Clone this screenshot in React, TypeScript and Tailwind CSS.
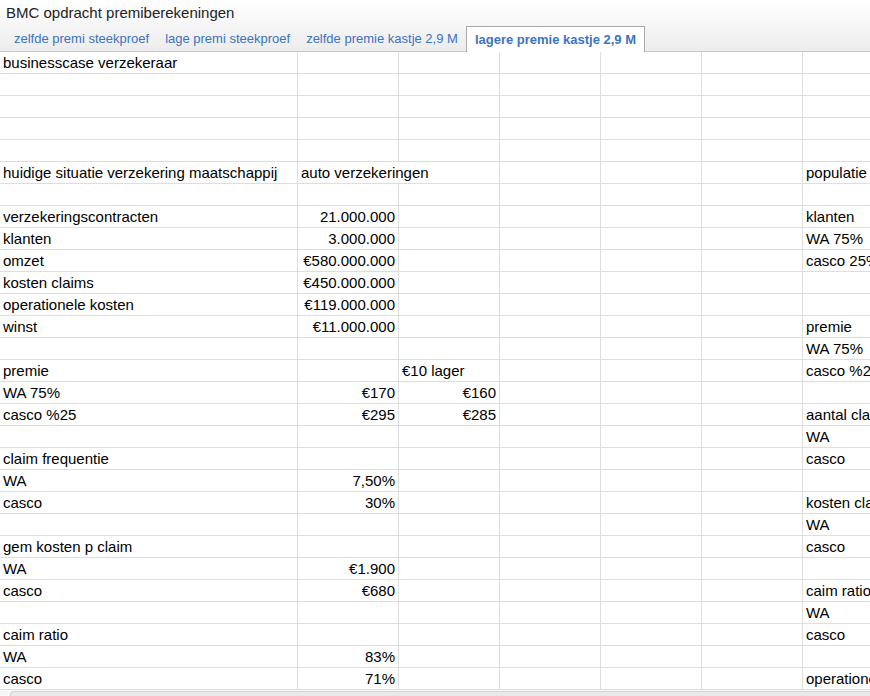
const rows: string[][] = [
  ["businesscase verzekeraar", "", "", "", "", "", ""],
  ["", "", "", "", "", "", ""],
  ["", "", "", "", "", "", ""],
  ["", "", "", "", "", "", ""],
  ["", "", "", "", "", "", ""],
  ["huidige situatie verzekering maatschappij", "auto verzekeringen", "", "", "", "", "populatie"],
  ["", "", "", "", "", "", ""],
  ["verzekeringscontracten", "21.000.000", "", "", "", "", "klanten"],
  ["klanten", "3.000.000", "", "", "", "", "WA 75%"],
  ["omzet", "€580.000.000", "", "", "", "", "casco 25%"],
  ["kosten claims", "€450.000.000", "", "", "", "", ""],
  ["operationele kosten", "€119.000.000", "", "", "", "", ""],
  ["winst", "€11.000.000", "", "", "", "", "premie"],
  ["", "", "", "", "", "", "WA 75%"],
  ["premie", "", "€10 lager", "", "", "", "casco %25"],
  ["WA 75%", "€170", "€160", "", "", "", ""],
  ["casco %25", "€295", "€285", "", "", "", "aantal claims"],
  ["", "", "", "", "", "", "WA"],
  ["claim frequentie", "", "", "", "", "", "casco"],
  ["WA", "7,50%", "", "", "", "", ""],
  ["casco", "30%", "", "", "", "", "kosten claims"],
  ["", "", "", "", "", "", "WA"],
  ["gem kosten p claim", "", "", "", "", "", "casco"],
  ["WA", "€1.900", "", "", "", "", ""],
  ["casco", "€680", "", "", "", "", "caim ratio"],
  ["", "", "", "", "", "", "WA"],
  ["caim ratio", "", "", "", "", "", "casco"],
  ["WA", "83%", "", "", "", "", ""],
  ["casco", "71%", "", "", "", "", "operationele kosten"],
];

const tabs = ["zelfde premi steekproef", "lage premi steekproef", "zelfde premie kastje 2,9 M"];

const isNumber = (s: string) => /^€?[\d.,]+%?$/.test(s);

export default function App() {
  return (
    <div className="w-[870px] h-[696px] overflow-hidden bg-white font-['Liberation_Sans',Arial,sans-serif] text-black">
      <div className="bg-gradient-to-b from-white to-[#ececec] border-b border-[#c9c9c9]">
        <div className="h-[26px] pl-[6px] text-[15px] leading-[26px] text-[#222]">BMC opdracht premiberekeningen</div>
        <div className="flex h-[25px] items-end pl-[6px] text-[13px]">
          {tabs.map((t) => (
            <div key={t} className="px-2 leading-[24px] text-[#3d73c0]">
              {t}
            </div>
          ))}
          <div className="-mb-px h-[26px] border border-b-0 border-[#a9a9a9] bg-white px-2 font-bold leading-[25px] text-[#3d73c0]">
            lagere premie kastje 2,9 M
          </div>
        </div>
      </div>

      <div className="grid grid-cols-[298px_repeat(6,101px)] text-[15px]">
        {rows.map((row, r) =>
          row.map((cell, c) => {
            // tekst loopt door in de lege cel ernaast
            if (r === 5 && c === 2) return null;
            const span = r === 5 && c === 1;
            return (
              <div
                key={`${r}-${c}`}
                className={`h-[22px] border-b border-r border-[#dedede] px-[3px] leading-[21px] whitespace-nowrap overflow-hidden ${
                  span ? "col-span-2" : ""
                } ${isNumber(cell) ? "text-right" : "text-left"}`}
              >
                {cell}
              </div>
            );
          })
        )}
      </div>

      <div className="h-[6px] bg-[#f7f7f7] pl-[10px] pt-px">
        <div className="h-full rounded-tl-[4px] border-l border-t border-[#d4d4d4] bg-[#e9e9e9]" />
      </div>
    </div>
  );
}
